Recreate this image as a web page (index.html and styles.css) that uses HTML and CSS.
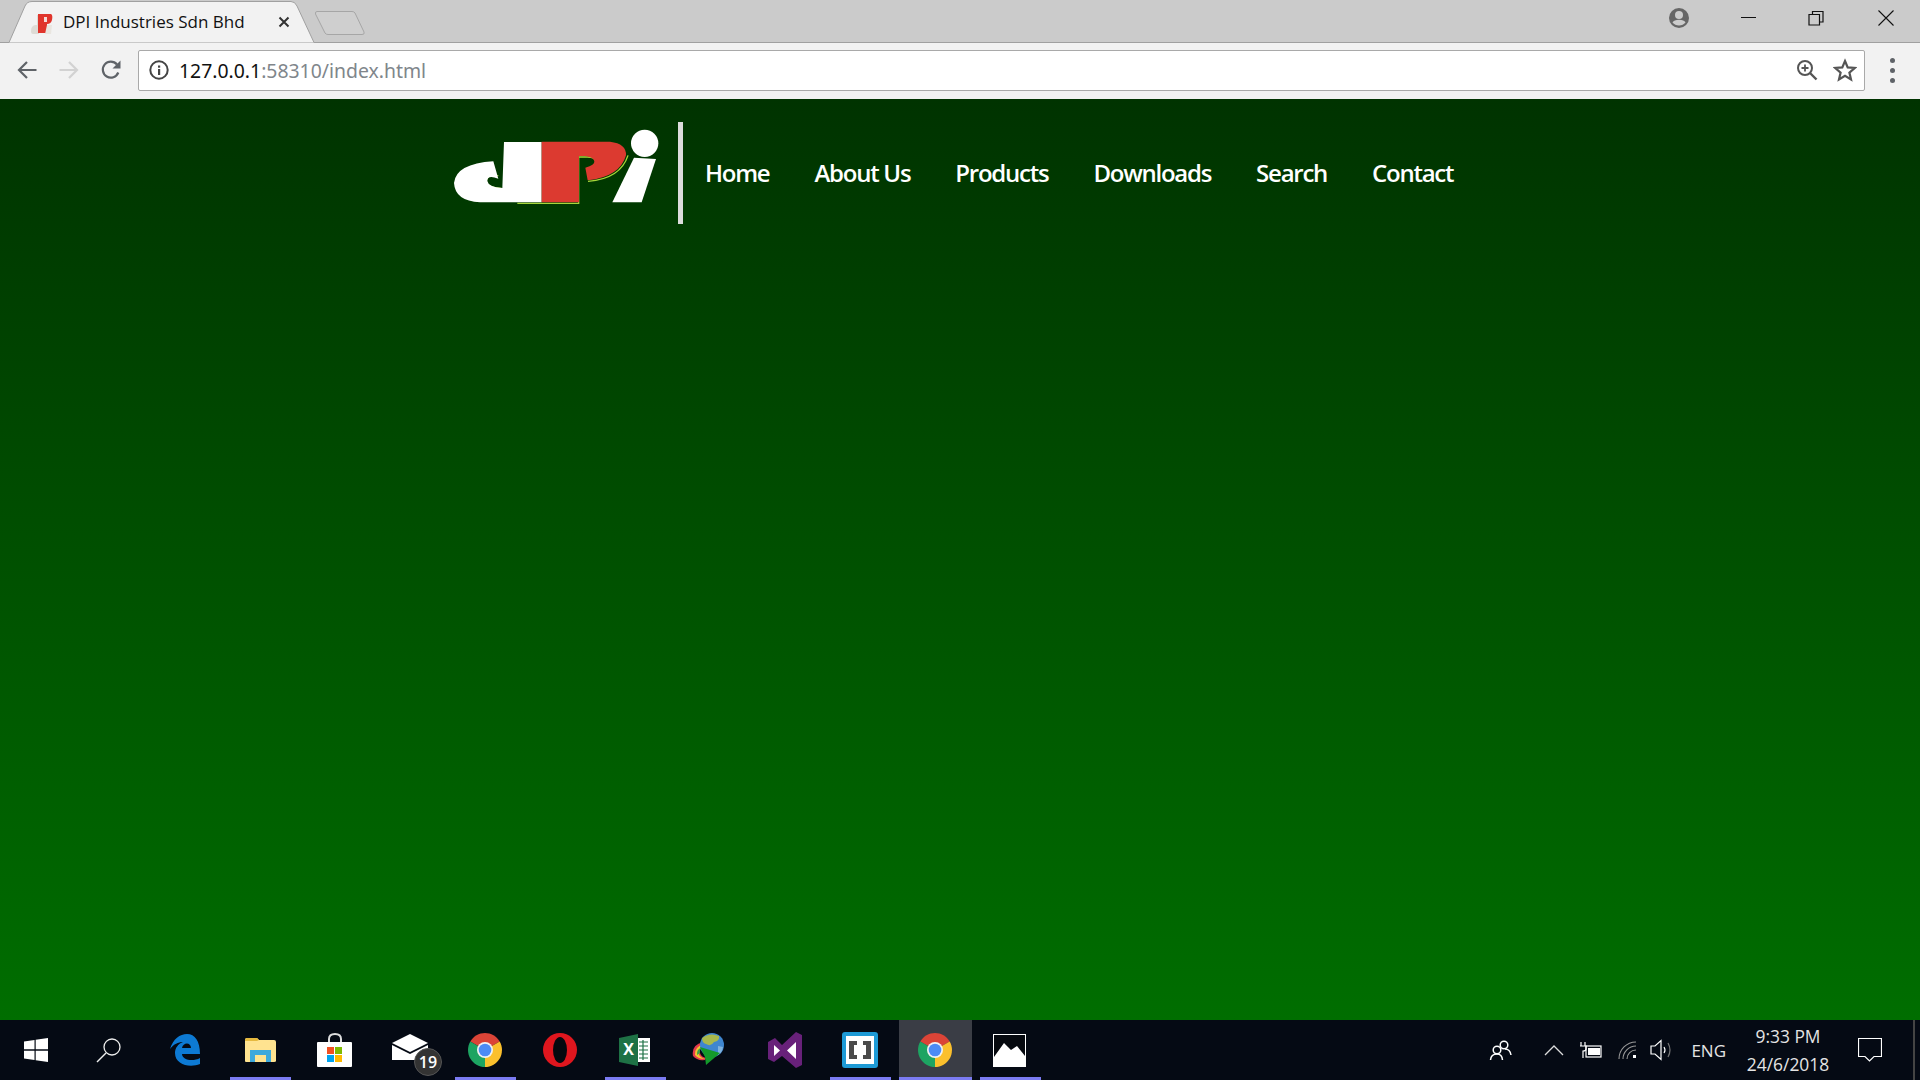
FILE: index.html
```html
<!DOCTYPE html>
<html lang="en">
<head>
    <meta charset="UTF-8">
    <meta name="viewport" content="width=device-width, initial-scale=1.0">
    <title>DPI Industries Sdn Bhd</title>
    <link rel="stylesheet" href="styles.css">
</head>
<body>

    <!-- Browser tabs and window buttons -->
    <div class="tabstrip">
        <div class="tab">
            <svg class="tab-shape" width="316" height="43" viewBox="0 0 316 43"><path d="M8 42.5 H9 L25 6 Q27 1.5 32 1.5 H291 Q295 1.5 297 6 L314 42.5 H316" fill="#f2f2f2" stroke="#a0a0a0"/></svg>
            <svg class="favicon" width="22" height="24" viewBox="0 0 22 24"><path d="M0 20 Q0 15 4 14 H6 V4 H8 V23 H2 Q0 23 0 20 Z" fill="#dedbd5"/><path d="M7 3 H20 Q22 4 21 9 Q20 13 16 13 V22 H7 Z" fill="#e0352c"/><path d="M13 6 H16 V11 H13 Z" fill="#f4dcd8"/><path d="M16 14 H21 L20 23 H14 Z" fill="#e9e6e0"/></svg>
            <span class="tab-title">DPI Industries Sdn Bhd</span>
            <svg class="tab-close" width="12" height="12" viewBox="0 0 12 12"><path d="M1.5 1.5 L10.5 10.5 M10.5 1.5 L1.5 10.5" stroke="#333" stroke-width="2"/></svg>
        </div>
        <svg class="newtab" width="52" height="26" viewBox="0 0 52 26"><path d="M4 1.5 H39 Q41 1.5 42 3 L51 22 Q52 24.5 49 24.5 H15 Q13 24.5 12 23 L2.5 4 Q2 1.5 4 1.5 Z" fill="#cfcfcf" stroke="#a6a6a6"/></svg>
        <div class="window-btns">
            <svg class="profile" width="22" height="22" viewBox="0 0 22 22"><circle cx="11" cy="11" r="10" fill="#666"/><circle cx="11" cy="8" r="4" fill="#ccc"/><path d="M4.5 15.5 Q6 12.8 11 12.8 Q16 12.8 17.5 15.5 Q15 18.5 11 18.5 Q7 18.5 4.5 15.5 Z" fill="#ccc"/></svg>
            <svg class="win-min" width="16" height="16" viewBox="0 0 16 16"><path d="M0 7.5 H15" stroke="#111" stroke-width="1"/></svg>
            <svg class="win-max" width="16" height="16" viewBox="0 0 16 16"><path d="M1 4.5 H11.5 V15 H1 Z M4.5 4.5 V1.5 H15 V12 H11.5" fill="none" stroke="#111" stroke-width="1.2"/></svg>
            <svg class="win-close" width="16" height="16" viewBox="0 0 16 16"><path d="M0.5 0.5 L15.5 15.5 M15.5 0.5 L0.5 15.5" stroke="#111" stroke-width="1.1"/></svg>
        </div>
    </div>

    <!-- Back, forward, reload and address box -->
    <div class="toolbar">
        <svg class="tool-back" width="22" height="22" viewBox="0 0 22 22"><path d="M20.5 11 H3 M11 3 L3 11 L11 19" fill="none" stroke="#5f6368" stroke-width="2.2"/></svg>
        <svg class="tool-forward" width="22" height="22" viewBox="0 0 22 22"><path d="M1.5 11 H19 M11 3 L19 11 L11 19" fill="none" stroke="#d2d2d2" stroke-width="2.2"/></svg>
        <svg class="tool-reload" width="22" height="22" viewBox="0 0 22 22"><path d="M18.3 13.5 A8 8 0 1 1 17 5.5" fill="none" stroke="#5f6368" stroke-width="2.2"/><path d="M20.5 1.5 V9.5 H12.5 Z" fill="#5f6368"/></svg>
        <div class="addressbar">
            <svg class="info" width="20" height="20" viewBox="0 0 20 20"><circle cx="10" cy="10" r="8.7" fill="none" stroke="#444" stroke-width="2"/><rect x="9" y="9" width="2.2" height="6" fill="#444"/><rect x="9" y="5.5" width="2.2" height="2.2" fill="#444"/></svg>
            <span class="url"><span class="url-host">127.0.0.1</span>:58310/index.html</span>
            <svg class="zoom-icon" width="22" height="22" viewBox="0 0 22 22"><circle cx="9" cy="9" r="7" fill="none" stroke="#555" stroke-width="2"/><path d="M14 14 L20.5 20.5" stroke="#555" stroke-width="2.4"/><path d="M5.5 9 H12.5 M9 5.5 V12.5" stroke="#555" stroke-width="1.8"/></svg>
            <svg class="star" width="24" height="24" viewBox="0 0 24 24"><path d="M12 3 L14.7 9.4 L21.7 10 L16.4 14.6 L18 21.4 L12 17.8 L6 21.4 L7.6 14.6 L2.3 10 L9.3 9.4 Z" fill="none" stroke="#555" stroke-width="2.2"/></svg>
        </div>
        <div class="kebab"><i></i><i></i><i></i></div>
    </div>

    <!-- The page itself -->
    <div class="page">
        <header class="site-header">
            <svg class="logo" width="210" height="80" viewBox="60 50 630 240">
                <path d="M262 279 H446 V140 H472 Q494 140 497 152" fill="none" stroke="#a6d63a" stroke-width="4"/>
                <path d="M474 213 Q572 205 594 135" fill="none" stroke="#a6d63a" stroke-width="4"/>
                <path d="M205 196 Q172 192 169 212 Q172 232 215 234" fill="none" stroke="#a6d63a" stroke-width="3"/>
                <path d="M222 95 H335 V276 H150 Q75 272 72 218 Q78 160 190 153 L205 205 Q172 192 172 212 Q175 230 217 233 Z" fill="#fff"/>
                <path d="M335 94 H540 Q590 100 588 135 Q570 200 473 210 L466 172 Q495 165 493 152 Q490 140 465 137 H447 V276 H335 Z" fill="#dc3a30"/>
                <circle cx="644" cy="99" r="41" fill="#fff"/>
                <path d="M612 142 L678 146 L635 276 H547 Z" fill="#fff"/>
            </svg>
            <div class="divider"></div>
            <nav class="main-nav">
                <a href="#">Home</a>
                <a href="#">About Us</a>
                <a href="#">Products</a>
                <a href="#">Downloads</a>
                <a href="#">Search</a>
                <a href="#">Contact</a>
            </nav>
        </header>
    </div>

    <!-- Windows taskbar -->
    <div class="taskbar">
        <div class="task-icons">
            <div class="task">
                <svg class="start-icon" width="24" height="24" viewBox="0 0 24 24"><path d="M0 3.5 L10.5 2 V11.3 H0 Z M11.7 1.8 L24 0 V11.3 H11.7 Z M0 12.7 H10.5 V22 L0 20.5 Z M11.7 12.7 H24 V24 L11.7 22.2 Z" fill="#fff"/></svg>
            </div>
            <div class="task">
                <svg class="search-icon" width="26" height="26" viewBox="0 0 26 26"><circle cx="16" cy="10" r="8" fill="none" stroke="#eee" stroke-width="1.3"/><path d="M10 16 L1 25" stroke="#eee" stroke-width="1.5"/></svg>
            </div>
            <div class="task">
                <svg width="30" height="32" viewBox="0 0 30 32"><path fill-rule="evenodd" d="M0 15 C3 5 10 0 17 0 C25 0 30 7 30 20 H12 C12 26 23 28 30 24 V30 C20 34 5 31 5 19 C5 14 8 10 13 8 C8 8 4 10 0 15 Z M12 14 H21 C21 8 13 8 12 14 Z" fill="#0d7ad4"/></svg>
            </div>
            <div class="task task-open">
                <svg width="32" height="26" viewBox="0 0 32 26"><path d="M1 3 Q1 1 3 1 H13 L15 3 H30 Q32 3 32 5 V24 Q32 25 30 25 H2 Q1 25 1 24 Z" fill="#ffe390"/><path d="M1 3 Q1 1 3 1 H13 L15 3 L13 4 H1 Z" fill="#e6b93e"/><path d="M6 25 V13 H27 V25 H22 V18 H11 V25 Z" fill="#3ea9dc"/></svg>
            </div>
            <div class="task">
                <svg width="36" height="34" viewBox="0 0 36 34"><path d="M12 10 V6 Q12 1 18 1 Q24 1 24 6 V10" fill="none" stroke="#ddd" stroke-width="2"/><rect y="9" width="35" height="25" rx="1" fill="#fff"/><rect x="10" y="14" width="7" height="7" fill="#f25022"/><rect x="18" y="14" width="7" height="7" fill="#7fba00"/><rect x="10" y="22" width="7" height="7" fill="#00a4ef"/><rect x="18" y="22" width="7" height="7" fill="#ffb900"/></svg>
            </div>
            <div class="task">
                <svg class="mail-icon" width="38" height="26" viewBox="0 0 38 26"><path d="M0 9 L18 0 L36 9 L18 18 Z" fill="#fff"/><path d="M0 11 L18 20 L36 11 V26 H0 Z" fill="#fff"/></svg>
                <span class="badge">19</span>
            </div>
            <div class="task task-open">
                <svg class="chrome" width="34" height="34" viewBox="0 0 34 34"><use href="#chrome-mark"/></svg>
            </div>
            <div class="task">
                <svg width="34" height="34" viewBox="0 0 34 34"><ellipse cx="17" cy="17" rx="17" ry="17" fill="#e0161e"/><ellipse cx="17" cy="17" rx="7" ry="13" fill="#06090f"/></svg>
            </div>
            <div class="task task-open">
                <svg width="32" height="32" viewBox="0 0 32 32"><path d="M18 4 H31 V28 H18 Z" fill="#fff"/><path d="M20 8 H29 M20 12 H29 M20 16 H29 M20 20 H29 M20 24 H29 M24 6 V26" stroke="#1e7145" stroke-width="1.2"/><path d="M0 4 L19 0 V32 L0 28 Z" fill="#1e7145"/><text x="9.5" y="21" class="excel-x">X</text></svg>
            </div>
            <div class="task">
                <svg width="36" height="36" viewBox="0 0 36 36"><path d="M1 24 Q-1 13 11 10 L14 14 Q7 15 8 21 Q9 25 14 26 L13 28 Q5 29 1 24 Z" fill="#e53a4d"/><path d="M3 23 Q2 15 12 12 L13 14 Q6 16 6.5 21 Q7 25 13 27 Q6 27 3 23 Z" fill="#f4c430"/><path d="M5 23 Q4 17 12.5 13.5 Q7 16 8 21 Z" fill="#3aa04a"/><circle cx="20" cy="13" r="12" fill="#3f86cf"/><path d="M10 6 Q18 0 27 4 Q28 9 22 10 Q19 15 14 12 Q10 11 10 6 Z" fill="#a9b84c"/><path d="M26 14 L31 15 Q30 21 26 23 Z" fill="#7fb2dd"/><path d="M8 15 L28 21 L14 33 L13 25 Z" fill="#149a2a"/></svg>
            </div>
            <div class="task">
                <svg width="34" height="36" viewBox="0 0 34 36"><path d="M0 10 L7 6 L14 13 L28 0 L34 3 V33 L28 36 L14 24 L6 30 L0 27 Z" fill="#68217a"/><path d="M6 13 L12 18.5 L6 24 Z M19 18.5 L28 10 V27 Z" fill="#fff"/></svg>
            </div>
            <div class="task task-open">
                <svg width="36" height="36" viewBox="0 0 36 36"><rect width="36" height="36" rx="3" fill="#1d9ad6"/><rect x="4" y="4" width="28" height="28" fill="#fff"/><path d="M7 9 H15 V13 H12 V23 H15 V27 H7 Z M21 9 H29 V27 H21 V23 H24 V13 H21 Z" fill="#4a4a4a"/></svg>
            </div>
            <div class="task task-active">
                <svg class="chrome" width="34" height="34" viewBox="0 0 34 34"><use href="#chrome-mark"/></svg>
            </div>
            <div class="task task-open">
                <svg width="33" height="33" viewBox="0 0 33 33"><rect x="0.5" y="0.5" width="32" height="32" fill="#06090f" stroke="#fff"/><path d="M1 32 V23 L11 9 L18 16 L24 12 L32 22 V32 Z" fill="#fff"/></svg>
            </div>
        </div>

        <div class="tray">
            <svg class="tray-people" width="24" height="22" viewBox="0 0 24 22"><circle cx="15" cy="6" r="3.8" fill="none" stroke="#fff" stroke-width="1.5"/><circle cx="8" cy="11" r="3.8" fill="none" stroke="#fff" stroke-width="1.5"/><path d="M1.5 21 Q2 15 8 15 Q13 15 13.5 21 M16 10 Q21 10 22 16" fill="none" stroke="#fff" stroke-width="1.5"/></svg>
            <svg class="tray-chevron" width="20" height="12" viewBox="0 0 20 12"><path d="M1 11 L10 2 L19 11" fill="none" stroke="#ddd" stroke-width="1.3"/></svg>
            <svg class="tray-battery" width="24" height="18" viewBox="0 0 24 18"><path d="M2 1 V5 M6 1 V5 M1 5 H7 V8 Q7 10 4 10 V17" fill="none" stroke="#fff" stroke-width="1.2"/><rect x="7" y="5" width="15" height="11" fill="none" stroke="#fff" stroke-width="1.2"/><rect x="9" y="7" width="12" height="7" fill="#fff"/></svg>
            <svg class="tray-wifi" width="20" height="20" viewBox="0 0 20 20"><path d="M1 19 A17 17 0 0 1 18 2 M5 19 A13 13 0 0 1 18 6 M9 19 A9 9 0 0 1 18 10" fill="none" stroke="#999" stroke-width="1.1"/><rect x="15" y="15" width="3" height="3" fill="#fff"/></svg>
            <svg class="tray-volume" width="24" height="22" viewBox="0 0 24 22"><path d="M1 7 H5 L11 1.5 V20.5 L5 15 H1 Z" fill="none" stroke="#fff" stroke-width="1.2"/><path d="M14 8 Q16 11 14 14" fill="none" stroke="#fff" stroke-width="1.2"/><path d="M18 4 Q22 11 18 18" fill="none" stroke="#777" stroke-width="1.2"/></svg>
            <span class="tray-lang">ENG</span>
            <div class="clock">
                <span>9:33 PM</span>
                <span>24/6/2018</span>
            </div>
            <svg class="tray-notify" width="24" height="24" viewBox="0 0 24 24"><path d="M0.5 0.5 H23.5 V18.5 H16 L11.5 23 L7 18.5 H0.5 Z" fill="none" stroke="#fff" stroke-width="1.2"/></svg>
            <div class="show-desktop"></div>
        </div>
    </div>

    <!-- Shared Chrome logo -->
    <svg class="defs" width="0" height="0">
        <defs>
            <g id="chrome-mark">
                <path d="M17 17 L2.3 8.5 A17 17 0 0 1 31.7 8.5 Z" fill="#db4437"/>
                <path d="M17 17 L31.7 8.5 A17 17 0 0 1 17 34 Z" fill="#fbc02d"/>
                <path d="M17 17 L17 34 A17 17 0 0 1 2.3 8.5 Z" fill="#1da462"/>
                <circle cx="17" cy="17" r="8" fill="#f1f1f1"/>
                <circle cx="17" cy="17" r="6.3" fill="#4c8bf5"/>
            </g>
        </defs>
    </svg>

</body>
</html>
```

FILE: styles.css
```css
body {
    margin: 0;
    height: 1080px;
    overflow: hidden;
    display: flex;
    flex-direction: column;
    font-family: "Open Sans", sans-serif;
    background-color: #003300;
}

svg {
    display: block;
    flex: none;
}

.defs {
    position: absolute;
}

/* tab strip */

.tabstrip {
    height: 42px;
    flex: none;
    display: flex;
    background-color: #cbcbcb;
    border-bottom: 1px solid #a0a0a0;
}

.tab {
    position: relative;
    width: 316px;
    height: 42px;
    display: flex;
    align-items: center;
    flex: none;
}

.tab-shape {
    position: absolute;
    left: 0;
    top: 0;
}

.favicon {
    position: relative;
    margin-left: 31px;
    margin-top: 3px;
}

.tab-title {
    position: relative;
    margin-left: 10px;
    width: 215px;
    font-size: 17px;
    color: #111;
    white-space: nowrap;
}

.tab-close {
    position: relative;
    margin-top: 2px;
}

.newtab {
    margin: 10px 0 0 -3px;
}

.window-btns {
    margin-left: auto;
    display: flex;
    align-items: center;
    padding-right: 26px;
    height: 36px;
}

.profile {
    margin-right: 51px;
}

.win-min {
    margin-right: 51px;
}

.win-max {
    margin-right: 54px;
}

/* toolbar */

.toolbar {
    height: 56px;
    box-sizing: border-box;
    padding-bottom: 2px;
    flex: none;
    display: flex;
    align-items: center;
    background-color: #f2f2f2;
}

.tool-back {
    margin-left: 16px;
}

.tool-forward {
    margin-left: 20px;
}

.tool-reload {
    margin-left: 20px;
}

.addressbar {
    width: 1727px;
    height: 41px;
    box-sizing: border-box;
    margin-left: 16px;
    display: flex;
    align-items: center;
    background-color: #fff;
    border: 1px solid #a9a9a9;
    border-radius: 2px;
    color: #777;
}

.info {
    margin-left: 10px;
}

.url {
    margin-left: 10px;
    font-size: 19.4px;
    font-family: "Noto Sans", sans-serif;
    color: #80868b;
}

.url-host {
    color: #111;
}

.zoom-icon {
    margin-left: auto;
    margin-right: 15px;
}

.star {
    margin-right: 7px;
}

.kebab {
    margin-left: 25px;
    display: flex;
    flex-direction: column;
    gap: 5px;
}

.kebab i {
    width: 5px;
    height: 5px;
    border-radius: 50%;
    background-color: #5f6368;
}

/* page */

.page {
    flex: 1;
    background: linear-gradient(to bottom, #003300, #006e00);
}

.site-header {
    display: flex;
    align-items: flex-start;
    padding: 23px 0 0 450px;
}

.logo {
    margin-top: 5px;
}

.divider {
    width: 5px;
    height: 102px;
    margin-left: 18px;
    background-color: #dcdcdc;
}

.main-nav {
    display: flex;
    align-self: center;
    gap: 45px;
    margin-left: 22px;
    padding-bottom: 2px;
}

.main-nav a {
    color: #fff;
    font-size: 24px;
    font-weight: 600;
    letter-spacing: -1.25px;
    text-decoration: none;
}

/* taskbar */

.taskbar {
    height: 60px;
    flex: none;
    display: flex;
    justify-content: space-between;
    background-color: #050a14;
}

.task-icons {
    display: flex;
    gap: 2px;
    margin-left: -1px;
}

.task {
    position: relative;
    width: 73px;
    height: 60px;
    box-sizing: border-box;
    padding-right: 2px;
    display: flex;
    align-items: center;
    justify-content: center;
}

.task-open::after,
.task-active::after {
    content: "";
    position: absolute;
    left: 6px;
    right: 6px;
    bottom: 0;
    height: 3px;
    background-color: #7b7bf2;
}

.task-active {
    background-color: #3a3d45;
}

.task-active::after {
    left: 0;
    right: 0;
}

.start-icon {
    margin-left: 2px;
}

.search-icon {
    margin-right: 2px;
}

.mail-icon {
    margin-right: -2px;
    margin-top: -6px;
}

.badge {
    position: absolute;
    left: 40px;
    top: 28px;
    width: 28px;
    height: 28px;
    line-height: 26px;
    box-sizing: border-box;
    border: 1px solid #555;
    border-radius: 50%;
    background-color: #333;
    color: #fff;
    font-size: 16px;
    font-weight: 600;
    text-align: center;
}

.excel-x {
    font-family: "Open Sans", sans-serif;
    font-size: 16px;
    font-weight: 700;
    fill: #fff;
    text-anchor: middle;
}

.tray {
    display: flex;
    align-items: center;
    color: #e4e4e4;
}

.tray-people {
    margin-right: 31px;
}

.tray-chevron {
    margin-right: 15px;
}

.tray-battery {
    margin-right: 15px;
}

.tray-wifi {
    margin-right: 12px;
}

.tray-volume {
    margin-right: 17px;
}

.tray-lang {
    font-size: 17px;
}

.clock {
    width: 100px;
    margin-left: 12px;
    display: flex;
    flex-direction: column;
    align-items: center;
    gap: 4px;
    font-size: 17.4px;
    line-height: 24px;
}

.tray-notify {
    margin-left: 20px;
}

.show-desktop {
    width: 2px;
    height: 60px;
    margin-left: 31px;
    margin-right: 5px;
    background-color: #444;
}
```
